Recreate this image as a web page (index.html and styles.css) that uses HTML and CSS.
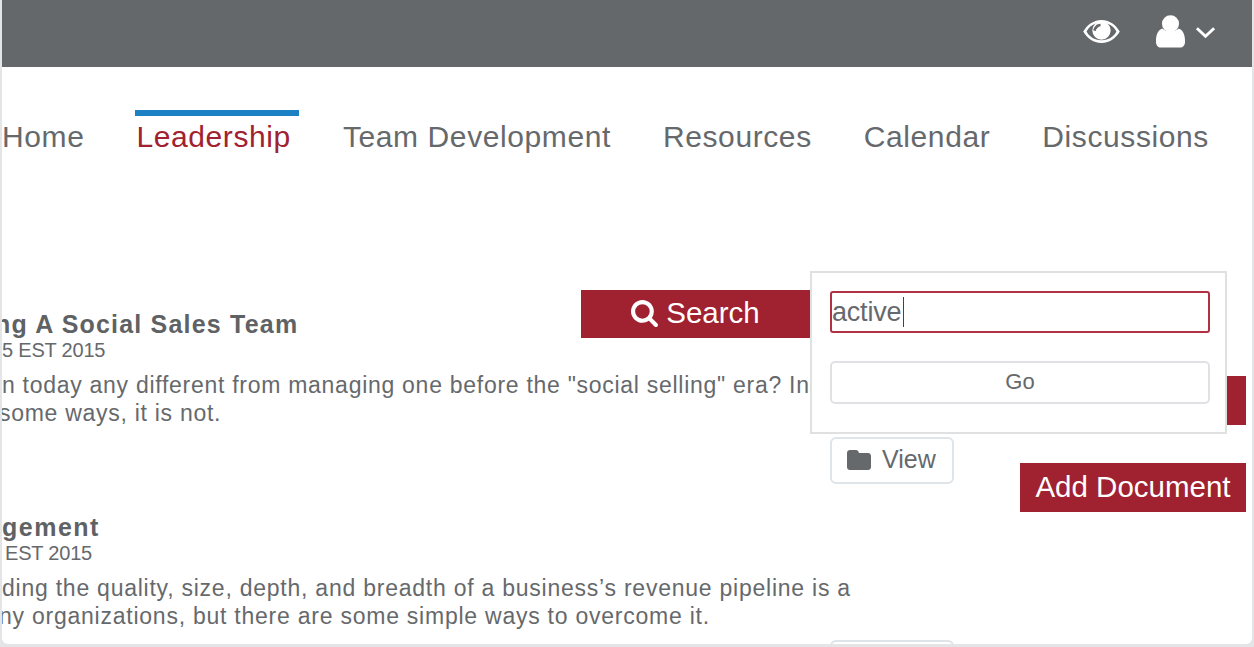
FILE: index.html
```
<!DOCTYPE html>
<html lang="en">
<head>
<meta charset="utf-8">
<title>Leadership</title>
<link rel="stylesheet" href="styles.css">
</head>
<body>
<div class="frame">
  <header class="topbar">
    <svg class="icon-eye" viewBox="0 0 38 26" aria-hidden="true">
      <path class="eye-white" fill-rule="evenodd" d="M19 1C28 1 34.500 7 38 13 34.500 19 28 25 19 25S3.500 19 0 13C3.500 7 10 1 19 1ZM19 4C11.500 4 6 8 3.500 13 6 18 11.500 22 19 22S32 18 34.500 13C32 8 26.500 4 19 4Z"/>
      <circle class="eye-white" cx="19" cy="12" r="9.500"/>
      <path class="eye-gray" d="M18 5C14 5 11 8 10.500 12L13 12.500C13.500 10 15.500 8 18 7.500Z"/>
    </svg>
    <div class="user">
      <svg class="icon-user" viewBox="0 0 32 34" aria-hidden="true">
        <circle cx="16" cy="9.500" r="8.800"/>
        <path d="M7.500 14.500C10 18 22 18 24.500 14.500 28.500 16 31 20 31 28 31 31.500 29 34 26 34H6C3 34 1 31.500 1 28 1 20 3.500 16 7.500 14.500Z"/>
      </svg>
      <svg class="icon-chevron" viewBox="0 0 22 14" aria-hidden="true"><path d="M2 3L11 11.500 20 3"/></svg>
    </div>
  </header>

  <nav class="nav">
    <a class="nav-item">Home</a>
    <a class="nav-item is-active">Leadership</a>
    <a class="nav-item">Team Development</a>
    <a class="nav-item">Resources</a>
    <a class="nav-item">Calendar</a>
    <a class="nav-item">Discussions</a>
  </nav>

  <div class="content">
    <main class="articles">
      <article class="article">
        <div class="article-head">
          <div>
            <h2 class="title title-first">ng A Social Sales Team</h2>
            <div class="date">5 EST 2015</div>
          </div>
          <button class="btn-red btn-search">
            <svg class="icon-search" viewBox="0 0 1664 1664" aria-hidden="true"><path d="M1152 704q0-185-131.500-316.500t-316.500-131.500-316.500 131.500-131.500 316.500 131.500 316.500 316.500 131.500 316.500-131.500 131.500-316.500zm512 832q0 52-38 90t-90 38q-54 0-90-38l-343-342q-179 124-399 124-143 0-273.500-55.500t-225-150-150-225-55.500-273.500 55.500-273.500 150-225 225-150 273.500-55.500 273.500 55.500 225 150 150 225 55.500 273.500q0 220-124 399l343 343q37 37 37 90z"/></svg>
            Search
          </button>
        </div>
        <p class="desc">n today any different from managing one before the "social selling" era? In<br><span class="cut">some ways, it is not.</span></p>
        <button class="btn-view">
          <svg class="icon-folder" viewBox="0 0 24 20" aria-hidden="true"><path d="M3 0H9C10.500 0 11.500 1 12 3H21C22.700 3 24 4.300 24 6V17C24 18.700 22.700 20 21 20H3C1.300 20 0 18.700 0 17V3C0 1.300 1.300 0 3 0Z"/></svg>
          View
        </button>
      </article>
      <article class="article">
        <div class="article-head">
          <div>
            <h2 class="title title-second">gement</h2>
            <div class="date date-second">EST 2015</div>
          </div>
        </div>
        <p class="desc desc-second">ding the quality, size, depth, and breadth of a business’s revenue pipeline is a<br><span class="cut">ny organizations, but there are some simple ways to overcome it.</span></p>
        <button class="btn-view">
          <svg class="icon-folder" viewBox="0 0 24 20" aria-hidden="true"><path d="M3 0H9C10.500 0 11.500 1 12 3H21C22.700 3 24 4.300 24 6V17C24 18.700 22.700 20 21 20H3C1.300 20 0 18.700 0 17V3C0 1.300 1.300 0 3 0Z"/></svg>
          View
        </button>
      </article>
    </main>
    <aside class="side">
      <div class="btn-red btn-side"></div>
      <button class="btn-red btn-side">Add Document</button>
    </aside>
  </div>

  <div class="popover">
    <div class="search-input"><span>active</span><i class="caret"></i></div>
    <button class="btn-go">Go</button>
  </div>
</div>
</body>
</html>
```

FILE: styles.css
```
* { box-sizing: border-box; }

html, body {
  margin: 0;
  height: 100%;
  overflow: hidden;
  background: #e4e5e6;
}

body {
  font-family: "Liberation Sans", Arial, sans-serif;
  color: #66696c;
}

.frame {
  position: relative;
  width: 1250px;
  height: 644px;
  margin-left: 2px;
  background: #fff;
  overflow: hidden;
  border-radius: 0 0 6px 6px;
}

.topbar {
  display: flex;
  align-items: center;
  justify-content: flex-end;
  gap: 35px;
  height: 67px;
  padding: 0 36px 5px 0;
  background: #65686b;
}

.icon-eye { width: 37px; height: 25px; }
.eye-white { fill: #fff; }
.eye-gray { fill: #65686b; }

.user { display: flex; align-items: center; gap: 9px; }
.icon-user { width: 31px; height: 34px; fill: #fff; }
.icon-chevron { width: 21px; height: 14px; fill: none; stroke: #fff; stroke-width: 3; margin-top: 1px; }

.nav {
  display: flex;
  gap: 52px;
  padding-top: 43px;
  height: 243px;
  align-items: flex-start;
}

.nav-item {
  display: block;
  padding-top: 6px;
  font-size: 30px;
  line-height: 30px;
  white-space: nowrap;
  letter-spacing: 0.600px;
  border-top: 6px solid transparent;
}

.is-active {
  color: #a0212f;
  border-top-color: #1b80c4;
  margin-left: -1px;
  padding-left: 1px;
  padding-right: 8px;
  margin-right: -8px;
}

.content {
  display: flex;
  justify-content: space-between;
  padding-right: 6px;
}

.articles { width: 960px; }

.article { margin-bottom: 29px; }

.article-head {
  display: flex;
  justify-content: space-between;
  width: 808px;
  height: 52px;
}

.title {
  margin: 0;
  font-size: 25px;
  line-height: 28px;
  font-weight: 700;
  letter-spacing: 1.200px;
  color: #5f6265;
  white-space: nowrap;
}

.title-first { margin-left: -7px; }
.title-second { letter-spacing: 1.500px; }

.date {
  font-size: 20px;
  line-height: 24px;
  letter-spacing: -0.200px;
  white-space: nowrap;
}

.date-second { margin-left: 3px; }

.desc {
  margin: 9px 0 0;
  font-size: 23px;
  line-height: 28px;
  letter-spacing: 0.720px;
  white-space: nowrap;
}

.desc-second { letter-spacing: 0.760px; }

.cut { margin-left: -3px; }

.btn-red {
  display: block;
  border: 0;
  padding: 0 0 2px;
  background: #a02130;
  color: #fff;
  font-family: inherit;
  font-size: 29.500px;
}

.btn-search {
  display: flex;
  align-items: center;
  justify-content: center;
  gap: 8px;
  width: 229px;
  height: 48px;
  margin-top: -20px;
}

.icon-search { width: 27px; height: 27px; fill: #fff; }

.btn-view {
  display: flex;
  align-items: center;
  gap: 11px;
  width: 124px;
  height: 47px;
  margin: 10px 0 0 828px;
  padding: 0 0 2px 15px;
  background: #fff;
  border: 2px solid #dfe4e8;
  border-radius: 6px;
  font-family: inherit;
  font-size: 25px;
  color: #66696c;
}

.icon-folder { width: 24px; height: 20px; fill: #66696c; }

.side {
  display: flex;
  flex-direction: column;
  gap: 38px;
  width: 226px;
  padding-top: 66px;
}

.btn-side { width: 226px; height: 49px; }

.popover {
  position: absolute;
  left: 808px;
  top: 271px;
  width: 417px;
  height: 163px;
  padding: 18px 15px 0 18px;
  background: #fff;
  border: 2px solid #dfe0e2;
}

.search-input {
  display: flex;
  align-items: center;
  height: 42px;
  border: 2px solid #b03242;
  border-radius: 3px;
  font-size: 27px;
  letter-spacing: -0.200px;
}

.caret {
  display: block;
  width: 1px;
  height: 30px;
  margin-left: 2px;
  background: #444;
}

.btn-go {
  display: block;
  width: 100%;
  height: 43px;
  margin-top: 28px;
  padding: 0 0 2px;
  background: #fff;
  border: 2px solid #dfe1e4;
  border-radius: 5px;
  font-family: inherit;
  font-size: 22px;
  color: #66696c;
}
```
